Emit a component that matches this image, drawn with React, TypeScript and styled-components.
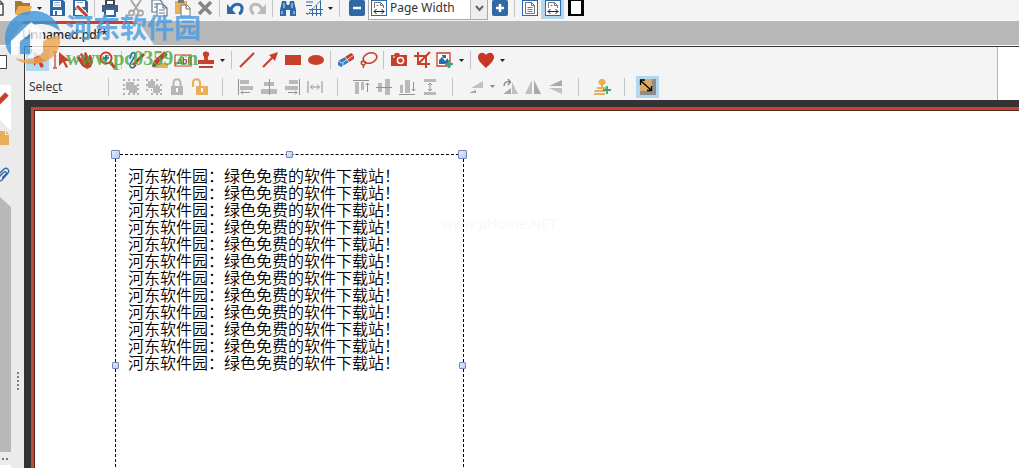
import React from "react";
import styled, { createGlobalStyle } from "styled-components";

const Global = createGlobalStyle`
  * { box-sizing: border-box; }
  html, body, #root { height: 100%; }
  body {
    margin: 0;
    overflow: hidden;
    background: #f4f4f4;
    color: #262626;
    font-family: "Noto Sans", "Noto Sans CJK SC", sans-serif;
    font-size: 12px;
    line-height: 16px;
  }
`;

const RED = "#c8402c";
const BLUE = "#2f68a6";
const GREY = "#a8a8a8";
const GOLD = "#e8ae58";
const DARK = "#40464e";
const GREEN = "#35a77b";

const Shell = styled.div`
  position: relative;
  display: flex;
  flex-direction: column;
  height: 100vh;
  overflow: hidden;
`;

const MainBar = styled.header`
  display: flex;
  flex: none;
  align-items: center;
  height: 21px;
  padding-bottom: 5px;
`;

const ToolButton = styled.button<{ $gap?: number; $active?: boolean }>`
  display: flex;
  flex: none;
  align-items: center;
  justify-content: center;
  width: 23px;
  height: 22px;
  margin: 0 0 0 ${(p) => p.$gap ?? 0}px;
  padding: 0;
  border: 0;
  background: ${(p) => (p.$active ? "#b5d7ee" : "transparent")};
  svg { flex: none; width: 18px; height: 18px; }
`;

const ArrowButton = styled.button`
  display: flex;
  flex: none;
  align-items: center;
  justify-content: center;
  width: 11px;
  height: 22px;
  padding: 0;
  border: 0;
  background: none;
  svg { flex: none; width: 5px; height: 3px; }
`;

const Divider = styled.span<{ $space?: number }>`
  flex: none;
  width: 1px;
  height: 18px;
  margin: 0 ${(p) => p.$space ?? 3}px;
  background: #c4c4c8;
`;

const ZoomField = styled.label`
  display: flex;
  flex: none;
  align-items: center;
  width: 120px;
  height: 24px;
  padding-left: 1px;
  border: 1px solid #a9a9a9;
  background: #fff;
  svg { flex: none; width: 18px; height: 18px; }
`;

const ZoomSelect = styled.select`
  flex: 1;
  min-width: 0;
  height: 22px;
  padding: 0 0 0 2px;
  border: 0;
  appearance: none;
  background: transparent;
  color: #333;
  font: inherit;
`;

const Chevron = styled.span`
  display: flex;
  align-items: center;
  justify-content: center;
  width: 17px;
  height: 22px;
  border-left: 1px solid #bbb;
  background: #eee;
  && svg { width: 9px; height: 7px; }
`;

const TabStrip = styled.nav`
  display: flex;
  flex: none;
  height: 25px;
  padding-left: 8px;
  background: #b8b8b8;
  border-bottom: 1px solid #fff;
`;

const DocumentTab = styled.a`
  width: 146px;
  height: 24px;
  padding: 3px 0 0 14px;
  border-top: 3px solid ${RED};
  background: #f1f1f1;
  clip-path: polygon(16px 0, 124px 0, 134px 6px, 146px 100%, 0 100%);
  color: #222;
  font-size: 12px;
  font-weight: 500;
  text-decoration: none;
`;

const Workspace = styled.div`
  display: flex;
  flex: 1;
  min-height: 0;
`;

const SidePane = styled.aside`
  display: flex;
  flex: none;
  width: 24px;
  background: #ebebeb;
`;

const PaneTabs = styled.div`
  display: flex;
  flex-direction: column;
  width: 11px;
`;

const PaneTab = styled.button<{ $height: number; $active?: boolean }>`
  flex: none;
  width: 11px;
  height: ${(p) => p.$height}px;
  padding: 0;
  border: 0;
  background: ${(p) => (p.$active ? "#fff" : "transparent")};
  svg { display: block; width: 11px; height: 100%; }
`;

const PaneBody = styled.div`
  flex: 1;
  background: #b8b8b8;
  clip-path: polygon(0 0, 100% 10px, 100% 100%, 0 100%);
`;

const PaneMore = styled.button`
  flex: none;
  width: 11px;
  height: 16px;
  padding: 0;
  border: 0;
  border-bottom: 3px solid #fff;
  background: transparent;
  svg { display: block; width: 11px; height: 12px; }
`;

const Grip = styled.div`
  display: flex;
  flex: 1;
  flex-direction: column;
  align-items: center;
  justify-content: flex-end;
  gap: 2px;
  padding-bottom: 78px;
`;

const GripDot = styled.i`
  width: 2px;
  height: 2px;
  background: #808080;
`;

const MainArea = styled.main`
  display: flex;
  flex: 1;
  flex-direction: column;
  min-width: 0;
  border-top: 1px solid #333;
  border-left: 1px solid #333;
`;

const ToolArea = styled.div`
  display: flex;
  flex: none;
  background: #fff;
`;

const ToolRows = styled.div`
  flex: 1;
  min-width: 0;
  border-right: 1px solid #b4b4b4;
  background: #f4f4f4;
`;

const EmptyDock = styled.div`
  flex: none;
  width: 21px;
`;

const ToolRow = styled.div<{ $height: number }>`
  display: flex;
  align-items: center;
  height: ${(p) => p.$height}px;
  padding-left: 1px;
`;

const ModeLabel = styled.span`
  width: 79px;
  padding-left: 3px;
  color: #3a3a3a;
`;

const Desk = styled.section`
  display: flex;
  flex: 1;
  min-height: 0;
  padding: 7px 0 0 6px;
  background: #333234;
`;

const Sheet = styled.article`
  position: relative;
  flex: 1;
  border-top: 3px solid #c9432f;
  border-left: 3px solid #c04a38;
  background: #fff;
  box-shadow: inset 1px 1px 0 #552824;
`;

const TextFrame = styled.div`
  position: absolute;
  top: 44px;
  left: 81px;
  width: 349px;
  height: 423px;
  padding: 12px;
  border: 1px dashed #000;
`;

const Line = styled.p`
  margin: 0;
  color: #000;
  font-family: "Noto Sans CJK SC", sans-serif;
  font-size: 16px;
  font-weight: 350;
  line-height: 17px;
  white-space: nowrap;
`;

const Handle = styled.i<{ $x: string; $y: string; $small?: boolean }>`
  position: absolute;
  left: ${(p) => p.$x};
  top: ${(p) => p.$y};
  width: ${(p) => (p.$small ? 7 : 9)}px;
  height: ${(p) => (p.$small ? 7 : 9)}px;
  margin: ${(p) => (p.$small ? -4 : -5)}px;
  border: 1px solid #7187bd;
  border-radius: 1px;
  background: linear-gradient(135deg, #e4edff, #b7c8ef);
`;

const FaintMark = styled.span`
  position: absolute;
  top: 106px;
  left: 408px;
  color: #f3f9fb;
  font-size: 14px;
`;

const SiteMark = styled.div`
  position: absolute;
  top: 10px;
  left: 4px;
  display: flex;
  gap: 4px;
  pointer-events: none;
  opacity: 0.8;
  svg { flex: none; width: 58px; height: 55px; }
`;

const SiteName = styled.div`
  padding-top: 1px;
  color: #4a9be0;
  font-family: "Noto Sans CJK SC", sans-serif;
  font-size: 27px;
  font-weight: 700;
  line-height: 32px;
  white-space: nowrap;
`;

const SiteAddress = styled.div`
  margin-top: 5px;
  color: #46a83c;
  font-family: "Liberation Serif", serif;
  font-size: 20px;
  font-weight: 700;
  line-height: 20px;
`;

const icons: Record<string, React.ReactNode> = {
  blank: <path d="M-1 1H8l4 4v11H-1z M8 1v4h4" fill="#fff" stroke={DARK} strokeWidth="1.4" />,
  open: (
    <>
      <path d="M1 15V2h6l2 2h7v3H5z" fill="#a8762e" />
      <path d="M4 7h14l-3 9H1z" fill={GOLD} />
    </>
  ),
  save: (
    <>
      <path d="M2 1h13l2 2v14H2z" fill={BLUE} />
      <path d="M5 2h8v6H5z M5 11h9v5H5z" fill="#fff" />
      <path d="M6 3.500h6 M6 6h6" stroke="#8ca8c5" />
      <path d="M7 12h2v4H7z" fill={BLUE} />
    </>
  ),
  saveAs: (
    <>
      <path d="M2 1h13l2 2v14H2z" fill={BLUE} />
      <path d="M4 2h10v6H4z M4 11h11v5H4z" fill="#fff" />
      <path d="M6 3.500h6" stroke="#8ca8c5" />
      <path d="M6 7l10 10" stroke="#fff" strokeWidth="5" />
      <path d="M6 7l10 10" stroke={RED} strokeWidth="3" />
    </>
  ),
  print: (
    <>
      <path d="M5 1h8v5H5z" fill="#fff" stroke={DARK} strokeWidth="2" />
      <path d="M1 6h16v7H1z" fill="#465b74" />
      <path d="M4 10h10v7H4z" fill="#fff" stroke={BLUE} strokeWidth="2" />
    </>
  ),
  cut: (
    <>
      <path d="M4 1l8 12 M14 1L6 13" stroke={GREY} strokeWidth="2" />
      <g fill="none" stroke={GREY} strokeWidth="1.800"><circle cx="4.500" cy="14" r="2.500" /><circle cx="13.500" cy="14" r="2.500" /></g>
    </>
  ),
  copy: (
    <g fill="#fff" stroke="#61798f" strokeWidth="1.200">
      <path d="M2 1h8l2 2v10H2z M4 5h6 M4 8h4" />
      <path d="M7 5h6l4 4v8H7z M13 5v4h4 M9 11h6 M9 14h6" />
    </g>
  ),
  paste: (
    <>
      <path d="M2 2h12v13H2z" fill={GOLD} />
      <path d="M5 0h6v4H5z" fill="#777" />
      <path d="M8 6h6l3 3v8H8z M13 6v4h4" fill="#fff" stroke="#777" />
    </>
  ),
  remove: <path d="M3 3l12 12 M15 3L3 15" stroke="#858585" strokeWidth="3.500" />,
  undo: (
    <>
      <path d="M5 11C7 3 17 4 16 10c0 2-1 4-3 5" fill="none" stroke={BLUE} strokeWidth="3" />
      <path d="M1 5v10h9z" fill={BLUE} />
    </>
  ),
  redo: (
    <>
      <path d="M13 11C11 3 1 4 2 10c0 2 1 4 3 5" fill="none" stroke="#b9b9b9" strokeWidth="3" />
      <path d="M17 5v10H8z" fill="#b9b9b9" />
    </>
  ),
  find: (
    <>
      <path d="M3 2h4l1 4h2l1-4h4l2 9v6h-6v-6H7v6H1v-6z" fill={BLUE} />
      <path d="M3 12v3 M15 12v3 M5 4v5 M13 4v5" stroke="#d9e7f4" />
    </>
  ),
  grid: (
    <>
      <path d="M1 3h7 M1 6.500h6 M4 10.500h14 M1 14.500h16 M7.500 9v8 M11.500 6v11 M15.500 2v15" stroke={BLUE} />
      <path d="M2 16L16 1" stroke="#8193a5" />
    </>
  ),
  minus: <><rect x="1" y="1" width="16" height="16" rx="2" fill={BLUE} /><path d="M5 9h8" stroke="#fff" strokeWidth="2.500" /></>,
  plus: <><rect x="1" y="1" width="16" height="16" rx="2" fill={BLUE} /><path d="M5 9h8 M9 5v8" stroke="#fff" strokeWidth="2.500" /></>,
  page: (
    <>
      <rect x="1.500" y="1.500" width="15" height="15" fill="#fff" stroke={BLUE} />
      <path d="M4.500 3.500h6l3 3v8h-9z M10.500 3.500v3h3 M6.500 8.500h5 M6.500 10.500h5 M6.500 12.500h5" fill="none" stroke="#555" strokeWidth="0.800" />
    </>
  ),
  pageWidth: (
    <>
      <rect x="1.500" y="1.500" width="15" height="15" fill="#fff" stroke={BLUE} />
      <path d="M4.500 9V3.500h6l3 3V9 M10.500 3.500v3h3 M6.500 6.500h2" fill="none" stroke="#555" strokeWidth="0.800" />
      <path d="M4 12.500h10 M6.500 10l-2.500 2.500 2.500 2.500 M11.500 10l2.500 2.500-2.500 2.500" fill="none" stroke="#222" />
    </>
  ),
  full: <><path d="M1 0h16v17H1z" fill="#000" /><path d="M4 2h10v13H4z" fill="#fff" /></>,
  select: <path d="M5 1v14l4-4 3 6 3-2-3-5h5z" fill={RED} />,
  textSelect: (
    <>
      <path d="M1 1h4 M3 1v16 M1 17h4" stroke="#b65c50" strokeWidth="1.400" />
      <path d="M7 1v14l4-4 3 6 2-1-3-6h5z" fill={RED} />
    </>
  ),
  hand: <path d="M1 6l3-1 3 3-2-5 2-1 3 5-1-5 2-1 3 6V4h2l2 7-2 5-4 2-5-3z" fill={RED} />,
  zoomIn: (
    <>
      <circle cx="8" cy="7" r="5.500" fill="#fff" stroke={RED} strokeWidth="2" />
      <path d="M12 11l5 6" stroke={RED} strokeWidth="3" />
      <path d="M8 4v6 M5 7h6" stroke={BLUE} strokeWidth="2" />
    </>
  ),
  pencil: (
    <>
      <path d="M2 8c0-6 4-8 5-5s-6 9-5 12 4 2 6-1" fill="none" stroke={BLUE} strokeWidth="1.500" />
      <path d="M5 14L16 3" stroke={RED} strokeWidth="3" />
    </>
  ),
  highlight: (
    <>
      <path d="M5 12h12v5H2z" fill={GOLD} />
      <path d="M4 12L15 2" stroke={RED} strokeWidth="5" />
      <path d="M1 16l1-5 4 4z" fill="#555" />
    </>
  ),
  textField: (
    <>
      <path d="M1 4h16v11H1z" fill="#fff" stroke={RED} strokeWidth="1.200" />
      <text x="3" y="13" fontFamily="Liberation Sans, sans-serif" fontSize="9" fontWeight="700" fill="#8d3b2d">ab</text>
      <path d="M14.500 6v7" stroke={RED} />
    </>
  ),
  stamp: <path d="M6 2c1-2 5-2 6 0 1 3-2 3-1 7h6v4H1V9h6c1-4-2-4-1-7z M2 15h14v2H2z" fill={RED} />,
  line: <path d="M2 16L16 2" stroke={RED} strokeWidth="2.200" />,
  arrow: <><path d="M2 16L12 6" stroke={RED} strokeWidth="2.200" /><path d="M17 1l-3 9-6-6z" fill={RED} /></>,
  rectangle: <path d="M1 4h16v10H1z" fill={RED} />,
  oval: <ellipse cx="9" cy="9" rx="8" ry="5" fill={RED} />,
  eraser: (
    <>
      <path d="M1 10l7-4 4 5-8 5-3-2z" fill="#3c79bd" />
      <path d="M8 6l6-4 3 2v4l-5 3z" fill={RED} />
      <path d="M1 10l4 2 12-8 M8 6l4 5 M6 12v4" fill="none" stroke="#eef4fa" strokeWidth="0.800" />
    </>
  ),
  lasso: (
    <>
      <ellipse cx="10" cy="7" rx="7" ry="5" transform="rotate(-20 10 7)" fill="none" stroke={RED} strokeWidth="1.600" />
      <path d="M2 10c-2 3 1 5 3 3s-2-4-3-2 M4 14l-1 3" fill="none" stroke={RED} strokeWidth="1.500" />
    </>
  ),
  camera: (
    <>
      <path d="M1 4h3l1-2h4l1 2h7v11H1z" fill={RED} />
      <circle cx="10.500" cy="9.500" r="3.800" fill="#fff" />
      <circle cx="10.500" cy="9.500" r="2.300" fill={RED} />
      <path d="M3 6h2" stroke="#fff" />
    </>
  ),
  crop: <path d="M1 5h12v12 M5 1v12h12 M5 13L17 1" fill="none" stroke={RED} strokeWidth="2" />,
  image: (
    <>
      <path d="M1 2h13v13H1z" fill="#fff" stroke={RED} strokeWidth="1.300" />
      <path d="M3 13V9l3-3 3 4 3-3v6z M6 4h4v3H7z" fill={BLUE} />
      <path d="M13 9v8 M9 13h8" stroke={GREEN} strokeWidth="2.200" />
    </>
  ),
  heart: <path d="M9 17C5 13 1 10 1 6s5-6 8-2c3-4 8-2 8 2s-4 7-8 11z" fill="#c63622" />,
  group: (
    <>
      <path d="M4 4h8v3h3v8H7v-3H4z" fill="#b7b7b7" />
      <path d="M1 2h2 M6 2h2 M11 2h2 M15 2h2 M1 16h2 M6 16h2 M11 16h2 M15 16h2 M1 7h2 M1 11h2 M15 7h2 M15 11h2" stroke="#9a9a9a" strokeWidth="1.600" />
    </>
  ),
  ungroup: (
    <>
      <path d="M3 3h7v7H3z M8 8h7v7H8z" fill="#b7b7b7" />
      <path d="M1 2h2 M6 2h2 M11 2h2 M1 7h2 M1 12h2 M6 12h1 M11 7h2 M15 7h2 M15 12h2 M6 16h2 M11 16h2 M15 16h2" stroke="#9a9a9a" strokeWidth="1.600" />
    </>
  ),
  lock: (
    <>
      <path d="M3 8h12v9H3z" fill="#b5b5b5" />
      <path d="M5.500 8V5c0-5 7-5 7 0v3" fill="none" stroke="#b5b5b5" strokeWidth="2" />
      <path d="M9 10v4" stroke="#fff" strokeWidth="2" />
    </>
  ),
  unlock: (
    <>
      <path d="M5 8h12v9H5z" fill={GOLD} />
      <path d="M2 9V5c0-5 7-5 7 0v3" fill="none" stroke={GOLD} strokeWidth="2" />
      <path d="M11 10v4" stroke="#fff" strokeWidth="2" />
    </>
  ),
  alignLeft: <><path d="M3 2h9v4H3z M3 8h13v4H3z" fill="#b9b9b9" /><path d="M1.500 1v16 M13 14.500H4 M6 12.500l-2 2 2 2" fill="none" stroke="#929292" /></>,
  alignCenter: <><path d="M4 4h10v4H4z M1 11h16v5H1z" fill="#b9b9b9" /><path d="M9.500 1v16" stroke="#929292" /></>,
  alignRight: <><path d="M6 2h9v4H6z M2 8h13v4H2z" fill="#b9b9b9" /><path d="M16.500 1v16 M5 14.500h9 M12 12.500l2 2-2 2" fill="none" stroke="#929292" /></>,
  spreadX: <><path d="M2 3v12 M16 3v12" stroke="#c0c0c0" strokeWidth="2" /><path d="M5 9h8 M7 6.500L4.500 9 7 11.500 M11 6.500l2.500 2.500-2.500 2.500" fill="none" stroke="#929292" /></>,
  alignTop: <><path d="M3 4h4v12H3z M9 4h3v8H9z" fill="#b9b9b9" /><path d="M1 2.500h16 M15.500 14V5 M13.500 7l2-2 2 2" fill="none" stroke="#929292" /></>,
  alignMiddle: <><path d="M3 5h4v9H3z M10 1h5v16h-5z" fill="#b9b9b9" /><path d="M1 9.500h16" stroke="#929292" /></>,
  alignBottom: <><path d="M2 7h3v8H2z M7 2h5v13H7z" fill="#b9b9b9" /><path d="M1 16.500h16 M15.500 4v9 M13.500 11l2 2 2-2" fill="none" stroke="#929292" /></>,
  spreadY: <><path d="M3 1h12v3H3z M3 14h12v3H3z" fill="#b9b9b9" /><path d="M9 5v8 M7 7l2-2 2 2 M7 11l2 2 2-2" fill="none" stroke="#929292" /></>,
  rotate: <><path d="M4 10L16 3v7z" fill="#c0c0c0" /><path d="M2 15l7-3v3z" fill="#a0a0a0" /></>,
  rotateRight: <><path d="M2 16l8-6v6z" fill="#a9a9a9" /><path d="M11 4l6 12h-6z" fill="#c0c0c0" /><path d="M3 8c0-4 3-5 6-4 M7 1l2.500 3L7 7" fill="none" stroke="#888" strokeWidth="1.400" /></>,
  mirror: <><path d="M1 16L8 2v14z" fill="#c0c0c0" /><path d="M10 2l7 14h-7z" fill="#a9a9a9" /></>,
  flip: <><path d="M2 8l13-6v6z" fill="#a9a9a9" /><path d="M2 10h13v6z" fill="#c0c0c0" /></>,
  addStamp: (
    <>
      <path d="M9 1a3 3 0 0 1 1 6H8a3 3 0 0 1 1-6z M8 6h2v3h3v2H4V9h4z M2 12h10v2H1z M1 15h11v2H1z" fill={GOLD} />
      <path d="M14 8v8 M10 12h8" stroke={GREEN} strokeWidth="1.800" />
    </>
  ),
  resize: (
    <>
      <path d="M1 1h16v16H1z" fill="#8d8d8d" />
      <path d="M1 1h12v12H1z" fill="#d9a968" />
      <path d="M2 3l10 9 M1.500 7V2H6 M8 12.500h4.500V8" fill="none" stroke="#000" strokeWidth="1.300" />
    </>
  ),
};

function Icon({ name }: { name: string }) {
  return <svg viewBox="0 0 18 18" aria-hidden="true">{icons[name]}</svg>;
}

function Tool({ icon, label, gap, active }: { icon: string; label: string; gap?: number; active?: boolean }) {
  return (
    <ToolButton type="button" aria-label={label} $gap={gap} $active={active}>
      <Icon name={icon} />
    </ToolButton>
  );
}

function More({ label, muted }: { label: string; muted?: boolean }) {
  return (
    <ArrowButton type="button" aria-label={label}>
      <svg viewBox="0 0 5 3"><path d="M0 0h5L2.500 3z" fill={muted ? "#888" : "#222"} /></svg>
    </ArrowButton>
  );
}

const lines = Array.from({ length: 12 }, () => "河东软件园：绿色免费的软件下载站！");

export default function App() {
  return (
    <Shell>
      <Global />
      <MainBar>
        <Tool icon="blank" label="New" gap={-12} />
        <Tool icon="open" label="Open" />
        <More label="Recent files" />
        <Tool icon="save" label="Save" />
        <Tool icon="saveAs" label="Save as" />
        <Divider />
        <Tool icon="print" label="Print" />
        <Tool icon="cut" label="Cut" gap={3} />
        <Tool icon="copy" label="Copy" />
        <Tool icon="paste" label="Paste" />
        <Tool icon="remove" label="Delete" />
        <Divider />
        <Tool icon="undo" label="Undo" />
        <Tool icon="redo" label="Redo" />
        <Divider />
        <Tool icon="find" label="Find" />
        <Tool icon="grid" label="Grid" gap={3} />
        <More label="Grid options" />
        <Divider />
        <Tool icon="minus" label="Zoom out" gap={2} />
        <ZoomField>
          <Icon name="pageWidth" />
          <ZoomSelect aria-label="Zoom level" defaultValue="width">
            <option value="width">Page Width</option>
          </ZoomSelect>
          <Chevron>
            <svg viewBox="0 0 9 7"><path d="M1 1l3.500 4L8 1" fill="none" stroke="#666" strokeWidth="2" /></svg>
          </Chevron>
        </ZoomField>
        <Tool icon="plus" label="Zoom in" />
        <Divider />
        <Tool icon="page" label="Fit page" />
        <Tool icon="pageWidth" label="Fit width" active />
        <Tool icon="full" label="Full screen" />
      </MainBar>

      <TabStrip>
        <DocumentTab href="#document">Unnamed.pdf*</DocumentTab>
      </TabStrip>

      <Workspace>
        <SidePane>
          <PaneTabs>
            <PaneTab type="button" aria-label="Pages" $height={39}>
              <svg viewBox="0 0 11 39"><path d="M-4 9.500H6.500v13H-4z" fill="#fff" stroke="#444" /></svg>
            </PaneTab>
            <PaneTab type="button" aria-label="Annotations" $height={46} $active>
              <svg viewBox="0 0 11 46">
                <path d="M-2 18L7 9" stroke={RED} strokeWidth="5" />
                <path d="M0 35l11 11H0z" fill="#ebebeb" />
              </svg>
            </PaneTab>
            <PaneTab type="button" aria-label="Notes" $height={30}>
              <svg viewBox="0 0 11 30"><path d="M0 0h5v4h4v10H0z M6 0l3 3H6z" fill={GOLD} /></svg>
            </PaneTab>
            <PaneTab type="button" aria-label="Attachments" $height={36}>
              <svg viewBox="0 0 11 36">
                <path d="M-2 14l6-6c3-2 6 1 4 4l-6 7c-2 2-5 0-3-3l5-5c2-1 3 1 2 2l-4 4" fill="none" stroke={BLUE} strokeWidth="1.300" />
              </svg>
            </PaneTab>
            <PaneBody />
            <PaneMore type="button" aria-label="More panes">
              <svg viewBox="0 0 11 12"><path d="M2 5h2v2H2z M6 5h2v2H6z" fill="#777" /></svg>
            </PaneMore>
          </PaneTabs>
          <Grip>
            {[0, 1, 2, 3, 4].map((n) => <GripDot key={n} />)}
          </Grip>
        </SidePane>

        <MainArea>
          <ToolArea>
            <ToolRows>
              <ToolRow $height={26}>
                <Tool icon="select" label="Select objects" active />
                <Tool icon="textSelect" label="Select text" />
                <Tool icon="hand" label="Hand" />
                <Tool icon="zoomIn" label="Zoom" />
                <Divider />
                <Tool icon="pencil" label="Pencil" />
                <Tool icon="highlight" label="Highlighter" />
                <Tool icon="textField" label="Text field" />
                <Tool icon="stamp" label="Stamp" />
                <More label="Stamp options" />
                <Divider />
                <Tool icon="line" label="Line" />
                <Tool icon="arrow" label="Arrow" />
                <Tool icon="rectangle" label="Rectangle" />
                <Tool icon="oval" label="Oval" />
                <Divider />
                <Tool icon="eraser" label="Eraser" />
                <Tool icon="lasso" label="Lasso" />
                <Divider />
                <Tool icon="camera" label="Snapshot" />
                <Tool icon="crop" label="Crop" />
                <Tool icon="image" label="Add image" />
                <More label="Image options" />
                <Divider />
                <Tool icon="heart" label="Favourites" />
                <More label="Favourite options" />
              </ToolRow>
              <ToolRow $height={27}>
                <ModeLabel>Sele<u>c</u>t</ModeLabel>
                <Divider />
                <Tool icon="group" label="Group" gap={7} />
                <Tool icon="ungroup" label="Ungroup" />
                <Tool icon="lock" label="Lock" />
                <Tool icon="unlock" label="Unlock" />
                <Divider $space={11} />
                <Tool icon="alignLeft" label="Align left" />
                <Tool icon="alignCenter" label="Align centre" />
                <Tool icon="alignRight" label="Align right" />
                <Tool icon="spreadX" label="Distribute horizontally" />
                <Divider $space={11} />
                <Tool icon="alignTop" label="Align top" />
                <Tool icon="alignMiddle" label="Align middle" />
                <Tool icon="alignBottom" label="Align bottom" />
                <Tool icon="spreadY" label="Distribute vertically" />
                <Divider $space={11} />
                <Tool icon="rotate" label="Rotate" />
                <More label="Rotate options" muted />
                <Tool icon="rotateRight" label="Rotate right" />
                <Tool icon="mirror" label="Mirror" />
                <Tool icon="flip" label="Flip" />
                <Divider $space={11} />
                <Tool icon="addStamp" label="Add to stamps" />
                <Divider $space={11} />
                <Tool icon="resize" label="Resize" active />
              </ToolRow>
            </ToolRows>
            <EmptyDock />
          </ToolArea>

          <Desk id="document">
            <Sheet>
              <FaintMark>www.pHome.NET</FaintMark>
              <TextFrame>
                {lines.map((line, i) => <Line key={i}>{line}</Line>)}
                <Handle $x="0" $y="0" />
                <Handle $x="50%" $y="0" $small />
                <Handle $x="100%" $y="0" />
                <Handle $x="0" $y="50%" $small />
                <Handle $x="100%" $y="50%" $small />
              </TextFrame>
            </Sheet>
          </Desk>
        </MainArea>
      </Workspace>

      <SiteMark>
        <svg viewBox="0 0 58 55" aria-hidden="true">
          <path d="M1 28C2 11 14 1 30 1c13 0 23 8 26 20-10-7-19-8-26-6L12 29l-4 4-1 12C3 41 1 35 1 28z" fill="#3b94d9" />
          <path d="M16 30l10-8v22H16z" fill="#3b94d9" />
          <path d="M56 26c2 17-11 28-27 28-8 0-14-2-18-6 11 3 19 2 26-3V34c6-7 12-8 19-8z" fill="#f0a34c" />
          <path d="M7 31L27 12l12 9v21c-5 5-10 6-14 6h-3l6-6V22L14 33v12H7z" fill="#fff" />
        </svg>
        <div>
          <SiteName>河东软件园</SiteName>
          <SiteAddress>www.pc0359.cn</SiteAddress>
        </div>
      </SiteMark>
    </Shell>
  );
}
